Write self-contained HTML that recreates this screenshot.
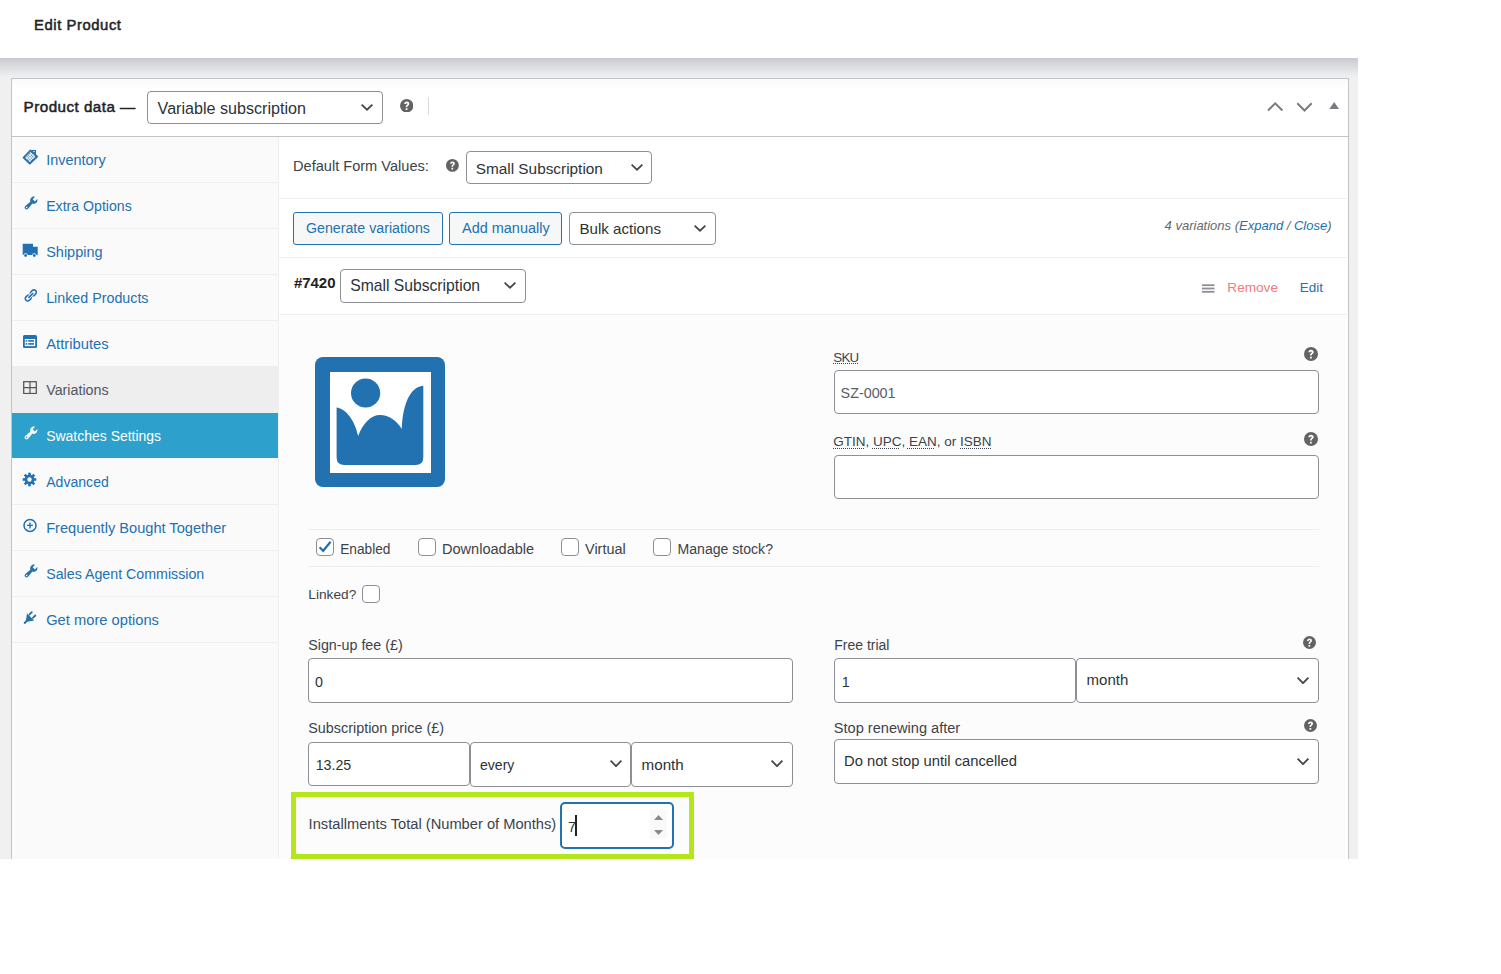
<!DOCTYPE html>
<html><head><meta charset="utf-8">
<style>
html,body{margin:0;padding:0;}
body{width:1501px;height:974px;position:relative;overflow:hidden;background:#fff;font-family:"Liberation Sans",sans-serif;color:#3c434a;}
.a{position:absolute;}
.t{position:absolute;white-space:nowrap;line-height:1;}
#admin{left:0;top:58px;width:1358px;height:801px;background:#f0f0f1;overflow:hidden;}
#shadow{left:0;top:0;width:1358px;height:20px;background:linear-gradient(#c8cacd,#d5d7da 30%,#e2e3e6 60%,#ecedef 85%,#f0f0f1);}
</style></head>
<body>
<div class="t" style="left:34.00px;top:15.00px;font-size:14.80px;color:#1d2327;line-height:20px;-webkit-text-stroke:0.5px #1d2327;letter-spacing:0.58px;">Edit Product</div>
<div id="admin" class="a"><div id="shadow" class="a"></div></div>
<div class="a" style="left:11px;top:78px;width:1336px;height:780px;border:1px solid #c3c4c7;border-bottom:none;background:#fff;"></div>
<div class="a" style="left:12px;top:79px;width:1336px;height:12px;background:linear-gradient(#fafafa,#fff);"></div>
<div class="a" style="left:12px;top:136px;width:1336px;height:1px;background:#c3c4c7;"></div>
<div class="a" style="left:12px;top:137px;width:266px;height:722px;background:#fafafa;"></div>
<div class="a" style="left:278px;top:137px;width:1px;height:722px;background:#eee;"></div>
<div class="a" style="left:279px;top:137px;width:1068px;height:722px;background:#fff;"></div>
<div class="t" style="left:23.60px;top:96.00px;font-size:15.20px;color:#1d2327;line-height:21px;-webkit-text-stroke:0.5px #1d2327;letter-spacing:0.47px;">Product data —</div>
<div class="a" style="left:147px;top:91px;width:236px;height:33px;border:1px solid #8c8f94;border-radius:4px;background:#fff;box-sizing:border-box;"></div>
<div class="t" style="left:157.60px;top:97.00px;font-size:16.11px;color:#2c3338;line-height:22px;">Variable subscription</div>
<svg class="a" style="left:360px;top:103.2px;width:14px;height:8.299999999999997px" viewBox="-1 -1 14 8.299999999999997"><path d="M0.6 0.6L6.0 5.6999999999999975L11.4 0.6" fill="none" stroke="#454545" stroke-width="1.75"/></svg>
<svg class="a" style="left:399.70px;top:98.70px;width:13.40px;height:13.40px" viewBox="0 0 20 20"><circle cx="10" cy="10" r="10" fill="#636363"/><path d="M6.2 7.6C6.2 5.2 7.9 3.8 10.1 3.8C12.3 3.8 13.8 5.1 13.8 7.1C13.8 8.6 13 9.4 11.9 10.1C11.2 10.6 11 10.9 11 11.6V12.3H8.6V11.4C8.6 10.2 9.1 9.5 10 8.9C10.8 8.4 11.1 8.1 11.1 7.4C11.1 6.7 10.7 6.3 10 6.3C9.2 6.3 8.8 6.8 8.8 7.6Z M8.5 13.8H11.1V16.6H8.5Z" fill="#fff"/></svg>
<div class="a" style="left:428px;top:97px;width:1px;height:18px;background:#dcdcde;"></div>
<svg class="a" style="left:1264px;top:99px;width:80px;height:16px" viewBox="1264 99 80 16"><path d="M1268 110.5L1275.2 103.3L1282.4 110.5" fill="none" stroke="#787c82" stroke-width="2"/><path d="M1297.3 103.3L1304.5 110.5L1311.7 103.3" fill="none" stroke="#787c82" stroke-width="2"/><path d="M1329.3 109L1334.2 102L1339 109z" fill="#787c82"/></svg>
<div class="a" style="left:12px;top:182px;width:266px;height:1px;background:#eee;"></div>
<div class="t" style="left:46.20px;top:150.00px;font-size:14.46px;color:#2271b1;line-height:20px;">Inventory</div>
<div class="a" style="left:12px;top:228px;width:266px;height:1px;background:#eee;"></div>
<div class="t" style="left:46.20px;top:196.00px;font-size:14.14px;color:#2271b1;line-height:20px;">Extra Options</div>
<div class="a" style="left:12px;top:274px;width:266px;height:1px;background:#eee;"></div>
<div class="t" style="left:46.20px;top:242.00px;font-size:14.47px;color:#2271b1;line-height:20px;">Shipping</div>
<div class="a" style="left:12px;top:320px;width:266px;height:1px;background:#eee;"></div>
<div class="t" style="left:46.20px;top:288.00px;font-size:14.28px;color:#2271b1;line-height:20px;">Linked Products</div>
<div class="a" style="left:12px;top:366px;width:266px;height:1px;background:#eee;"></div>
<div class="t" style="left:46.20px;top:334.00px;font-size:14.79px;color:#2271b1;line-height:20px;">Attributes</div>
<div class="a" style="left:12px;top:367px;width:266px;height:45px;background:#eee;"></div>
<div class="a" style="left:12px;top:412px;width:266px;height:1px;background:#eee;"></div>
<div class="t" style="left:46.20px;top:380.00px;font-size:14.29px;color:#50575e;line-height:20px;">Variations</div>
<div class="a" style="left:12px;top:413px;width:266px;height:45px;background:#2ea0cc;"></div>
<div class="t" style="left:46.20px;top:426.00px;font-size:13.98px;color:#fff;line-height:20px;">Swatches Settings</div>
<div class="a" style="left:12px;top:504px;width:266px;height:1px;background:#eee;"></div>
<div class="t" style="left:46.20px;top:472.00px;font-size:14.09px;color:#2271b1;line-height:20px;">Advanced</div>
<div class="a" style="left:12px;top:550px;width:266px;height:1px;background:#eee;"></div>
<div class="t" style="left:46.20px;top:518.00px;font-size:14.62px;color:#2271b1;line-height:20px;">Frequently Bought Together</div>
<div class="a" style="left:12px;top:596px;width:266px;height:1px;background:#eee;"></div>
<div class="t" style="left:46.20px;top:564.00px;font-size:14.23px;color:#2271b1;line-height:20px;">Sales Agent Commission</div>
<div class="a" style="left:12px;top:642px;width:266px;height:1px;background:#eee;"></div>
<div class="t" style="left:46.20px;top:610.00px;font-size:14.71px;color:#2271b1;line-height:20px;">Get more options</div>
<div class="t" style="left:293.00px;top:156.00px;font-size:14.59px;color:#3c434a;line-height:20px;">Default Form Values:</div>
<svg class="a" style="left:446.30px;top:159.30px;width:12.80px;height:12.80px" viewBox="0 0 20 20"><circle cx="10" cy="10" r="10" fill="#636363"/><path d="M6.2 7.6C6.2 5.2 7.9 3.8 10.1 3.8C12.3 3.8 13.8 5.1 13.8 7.1C13.8 8.6 13 9.4 11.9 10.1C11.2 10.6 11 10.9 11 11.6V12.3H8.6V11.4C8.6 10.2 9.1 9.5 10 8.9C10.8 8.4 11.1 8.1 11.1 7.4C11.1 6.7 10.7 6.3 10 6.3C9.2 6.3 8.8 6.8 8.8 7.6Z M8.5 13.8H11.1V16.6H8.5Z" fill="#fff"/></svg>
<div class="a" style="left:466px;top:151px;width:186px;height:33px;border:1px solid #8c8f94;border-radius:4px;background:#fff;box-sizing:border-box;"></div>
<div class="t" style="left:475.70px;top:158.00px;font-size:15.37px;color:#2c3338;line-height:21px;">Small Subscription</div>
<svg class="a" style="left:630px;top:163.2px;width:14px;height:8.300000000000011px" viewBox="-1 -1 14 8.300000000000011"><path d="M0.6 0.6L6.0 5.700000000000012L11.4 0.6" fill="none" stroke="#454545" stroke-width="1.75"/></svg>
<div class="a" style="left:279px;top:198px;width:1068px;height:1px;background:#eee;"></div>
<div class="a" style="left:293px;top:212px;width:150px;height:33px;border:1px solid #2271b1;border-radius:3px;background:#f6f7f7;box-sizing:border-box;"></div>
<div class="t" style="left:306.00px;top:218.00px;font-size:14.21px;color:#2271b1;line-height:20px;">Generate variations</div>
<div class="a" style="left:449px;top:212px;width:113px;height:33px;border:1px solid #2271b1;border-radius:3px;background:#f6f7f7;box-sizing:border-box;"></div>
<div class="t" style="left:462.00px;top:218.00px;font-size:14.47px;color:#2271b1;line-height:20px;">Add manually</div>
<div class="a" style="left:569px;top:212px;width:147px;height:33px;border:1px solid #8c8f94;border-radius:4px;background:#fff;box-sizing:border-box;"></div>
<div class="t" style="left:579.50px;top:218.00px;font-size:15.12px;color:#2c3338;line-height:21px;">Bulk actions</div>
<svg class="a" style="left:693px;top:223.7px;width:14px;height:8.300000000000011px" viewBox="-1 -1 14 8.300000000000011"><path d="M0.6 0.6L6.0 5.700000000000012L11.4 0.6" fill="none" stroke="#454545" stroke-width="1.75"/></svg>
<div class="t" style="left:1164.6px;top:216px;line-height:19px;font-size:13px;font-style:italic;color:#646970;" id="varcount">4 variations (<span style="color:#2271b1">Expand</span> / <span style="color:#2271b1">Close</span>)</div>
<div class="a" style="left:279px;top:257px;width:1068px;height:1px;background:#eee;"></div>
<div class="t" style="left:293.90px;top:272.00px;font-size:14.96px;color:#1d2327;font-weight:bold;line-height:21px;">#7420</div>
<div class="a" style="left:340px;top:269px;width:186px;height:34px;border:1px solid #8c8f94;border-radius:4px;background:#fff;box-sizing:border-box;"></div>
<div class="t" style="left:350.20px;top:275.00px;font-size:15.70px;color:#2c3338;line-height:21px;">Small Subscription</div>
<svg class="a" style="left:503px;top:281.2px;width:14px;height:8.300000000000011px" viewBox="-1 -1 14 8.300000000000011"><path d="M0.6 0.6L6.0 5.700000000000012L11.4 0.6" fill="none" stroke="#454545" stroke-width="1.75"/></svg>
<svg class="a" style="left:1202px;top:284px;width:13px;height:9px" viewBox="0 0 13 9"><rect x="0" y="0.3" width="12.5" height="1.8" fill="#8c8f94"/><rect x="0" y="3.6" width="12.5" height="1.8" fill="#8c8f94"/><rect x="0" y="6.9" width="12.5" height="1.8" fill="#8c8f94"/></svg>
<div class="t" style="left:1227.30px;top:278.00px;font-size:13.61px;color:#f47b7b;line-height:19px;">Remove</div>
<div class="t" style="left:1299.80px;top:278.00px;font-size:13.45px;color:#2271b1;line-height:19px;">Edit</div>
<div class="a" style="left:279px;top:314px;width:1068px;height:1px;background:#eee;"></div>
<div class="a" style="left:279px;top:315px;width:1067px;height:544px;background:#fcfcfc;"></div>
<svg class="a" style="left:315px;top:357px;width:130px;height:130px" viewBox="0 0 130 130"><rect x="0" y="0" width="130" height="130" rx="8" fill="#2271b1"/><rect x="15" y="15" width="101" height="101" fill="#fff"/><circle cx="50.6" cy="36" r="14.6" fill="#2271b1"/><path d="M21.6 50.4C31 51.5 39.5 63 43.2 79C48 66 56 58 65 58C74 58 82 64 86.8 72C87.5 50 94 30 108.3 28.8V100.3Q108.3 108 100.6 108H29.3Q21.6 108 21.6 100.3Z" fill="#2271b1"/></svg>
<div class="t" style="left:833.3px;top:348px;line-height:19px;font-size:13.3px;color:#3c434a;letter-spacing:-0.75px;">SKU</div>
<svg class="a" style="left:833px;top:363px;width:25px;height:1px" viewBox="0 0 25 1"><line x1="0" y1="0.5" x2="25" y2="0.5" stroke="#3c434a" stroke-width="1" stroke-dasharray="1 1"/></svg>
<svg class="a" style="left:1304.00px;top:347.00px;width:14.00px;height:14.00px" viewBox="0 0 20 20"><circle cx="10" cy="10" r="10" fill="#636363"/><path d="M6.2 7.6C6.2 5.2 7.9 3.8 10.1 3.8C12.3 3.8 13.8 5.1 13.8 7.1C13.8 8.6 13 9.4 11.9 10.1C11.2 10.6 11 10.9 11 11.6V12.3H8.6V11.4C8.6 10.2 9.1 9.5 10 8.9C10.8 8.4 11.1 8.1 11.1 7.4C11.1 6.7 10.7 6.3 10 6.3C9.2 6.3 8.8 6.8 8.8 7.6Z M8.5 13.8H11.1V16.6H8.5Z" fill="#fff"/></svg>
<div class="a" style="left:834px;top:370px;width:485px;height:44px;border:1px solid #8c8f94;border-radius:4px;background:#fff;box-sizing:border-box;"></div>
<div class="t" style="left:840.60px;top:383.00px;font-size:14.34px;color:#585e65;line-height:20px;">SZ-0001</div>
<div class="t" style="left:833.3px;top:432px;line-height:19px;font-size:13.5px;color:#3c434a;" id="gtin">GTIN, UPC, EAN, or ISBN</div>
<svg class="a" style="left:833px;top:448px;width:31px;height:1px" viewBox="0 0 31 1"><line x1="0" y1="0.5" x2="31" y2="0.5" stroke="#3c434a" stroke-width="1" stroke-dasharray="1 1"/></svg>
<svg class="a" style="left:872px;top:448px;width:27px;height:1px" viewBox="0 0 27 1"><line x1="0" y1="0.5" x2="27" y2="0.5" stroke="#3c434a" stroke-width="1" stroke-dasharray="1 1"/></svg>
<svg class="a" style="left:907px;top:448px;width:27px;height:1px" viewBox="0 0 27 1"><line x1="0" y1="0.5" x2="27" y2="0.5" stroke="#3c434a" stroke-width="1" stroke-dasharray="1 1"/></svg>
<svg class="a" style="left:960px;top:448px;width:31px;height:1px" viewBox="0 0 31 1"><line x1="0" y1="0.5" x2="31" y2="0.5" stroke="#3c434a" stroke-width="1" stroke-dasharray="1 1"/></svg>
<svg class="a" style="left:1304.00px;top:432.00px;width:14.00px;height:14.00px" viewBox="0 0 20 20"><circle cx="10" cy="10" r="10" fill="#636363"/><path d="M6.2 7.6C6.2 5.2 7.9 3.8 10.1 3.8C12.3 3.8 13.8 5.1 13.8 7.1C13.8 8.6 13 9.4 11.9 10.1C11.2 10.6 11 10.9 11 11.6V12.3H8.6V11.4C8.6 10.2 9.1 9.5 10 8.9C10.8 8.4 11.1 8.1 11.1 7.4C11.1 6.7 10.7 6.3 10 6.3C9.2 6.3 8.8 6.8 8.8 7.6Z M8.5 13.8H11.1V16.6H8.5Z" fill="#fff"/></svg>
<div class="a" style="left:834px;top:455px;width:485px;height:44px;border:1px solid #8c8f94;border-radius:4px;background:#fff;box-sizing:border-box;"></div>
<div class="a" style="left:308px;top:529px;width:1011px;height:1px;background:#eee;"></div>
<div class="a" style="left:308px;top:566px;width:1011px;height:1px;background:#eee;"></div>
<div class="a" style="left:316px;top:538px;width:18px;height:18px;border:1px solid #8c8f94;border-radius:4px;background:#fff;box-sizing:border-box;"></div>
<svg class="a" style="left:316px;top:538px;width:18px;height:18px" viewBox="0 0 18 18"><path d="M3.6 9.2L7.2 12.8L14.6 3.8" fill="none" stroke="#2271b1" stroke-width="2.2"/></svg>
<div class="t" style="left:340.20px;top:540.00px;font-size:13.71px;color:#3c434a;line-height:19px;">Enabled</div>
<div class="a" style="left:418px;top:538px;width:18px;height:18px;border:1px solid #8c8f94;border-radius:4px;background:#fff;box-sizing:border-box;"></div>
<div class="t" style="left:442.00px;top:539.00px;font-size:14.56px;color:#3c434a;line-height:20px;">Downloadable</div>
<div class="a" style="left:561px;top:538px;width:18px;height:18px;border:1px solid #8c8f94;border-radius:4px;background:#fff;box-sizing:border-box;"></div>
<div class="t" style="left:585.00px;top:539.00px;font-size:14.49px;color:#3c434a;line-height:20px;">Virtual</div>
<div class="a" style="left:653px;top:538px;width:18px;height:18px;border:1px solid #8c8f94;border-radius:4px;background:#fff;box-sizing:border-box;"></div>
<div class="t" style="left:677.50px;top:539.00px;font-size:14.09px;color:#3c434a;line-height:20px;">Manage stock?</div>
<div class="t" style="left:308.30px;top:585.00px;font-size:13.69px;color:#3c434a;line-height:19px;">Linked?</div>
<div class="a" style="left:362px;top:585px;width:18px;height:18px;border:1px solid #8c8f94;border-radius:4px;background:#fff;box-sizing:border-box;"></div>
<div class="t" style="left:308.20px;top:635.00px;font-size:14.29px;color:#3c434a;line-height:20px;">Sign-up fee (£)</div>
<div class="a" style="left:308px;top:658px;width:485px;height:45px;border:1px solid #8c8f94;border-radius:4px;background:#fff;box-sizing:border-box;"></div>
<div class="t" style="left:315.00px;top:672.00px;font-size:14.30px;color:#2c3338;line-height:20px;">0</div>
<div class="t" style="left:834.30px;top:635.00px;font-size:13.97px;color:#3c434a;line-height:20px;">Free trial</div>
<svg class="a" style="left:1303.40px;top:635.70px;width:13.00px;height:13.00px" viewBox="0 0 20 20"><circle cx="10" cy="10" r="10" fill="#636363"/><path d="M6.2 7.6C6.2 5.2 7.9 3.8 10.1 3.8C12.3 3.8 13.8 5.1 13.8 7.1C13.8 8.6 13 9.4 11.9 10.1C11.2 10.6 11 10.9 11 11.6V12.3H8.6V11.4C8.6 10.2 9.1 9.5 10 8.9C10.8 8.4 11.1 8.1 11.1 7.4C11.1 6.7 10.7 6.3 10 6.3C9.2 6.3 8.8 6.8 8.8 7.6Z M8.5 13.8H11.1V16.6H8.5Z" fill="#fff"/></svg>
<div class="a" style="left:834px;top:658px;width:242px;height:45px;border:1px solid #8c8f94;border-radius:4px;background:#fff;box-sizing:border-box;"></div>
<div class="t" style="left:841.80px;top:672.00px;font-size:14.30px;color:#2c3338;line-height:20px;">1</div>
<div class="a" style="left:1076px;top:658px;width:243px;height:45px;border:1px solid #8c8f94;border-radius:4px;background:#fff;box-sizing:border-box;"></div>
<div class="t" style="left:1086.60px;top:669.00px;font-size:15.00px;color:#2c3338;line-height:21px;">month</div>
<svg class="a" style="left:1296px;top:675.7px;width:14px;height:8.799999999999955px" viewBox="-1 -1 14 8.799999999999955"><path d="M0.6 0.6L6.0 6.199999999999955L11.4 0.6" fill="none" stroke="#454545" stroke-width="1.75"/></svg>
<div class="t" style="left:308.30px;top:718.00px;font-size:14.36px;color:#3c434a;line-height:20px;">Subscription price (£)</div>
<div class="a" style="left:308px;top:742px;width:162px;height:44px;border:1px solid #8c8f94;border-radius:4px;background:#fff;box-sizing:border-box;"></div>
<div class="t" style="left:315.70px;top:755.00px;font-size:14.21px;color:#2c3338;line-height:20px;">13.25</div>
<div class="a" style="left:470px;top:742px;width:161px;height:45px;border:1px solid #8c8f94;border-radius:4px;background:#fff;box-sizing:border-box;"></div>
<div class="t" style="left:480.00px;top:755.00px;font-size:14.07px;color:#2c3338;line-height:20px;">every</div>
<svg class="a" style="left:609px;top:758.7px;width:14px;height:8.799999999999955px" viewBox="-1 -1 14 8.799999999999955"><path d="M0.6 0.6L6.0 6.199999999999955L11.4 0.6" fill="none" stroke="#454545" stroke-width="1.75"/></svg>
<div class="a" style="left:631px;top:742px;width:162px;height:45px;border:1px solid #8c8f94;border-radius:4px;background:#fff;box-sizing:border-box;"></div>
<div class="t" style="left:641.60px;top:754.00px;font-size:15.18px;color:#2c3338;line-height:21px;">month</div>
<svg class="a" style="left:769.5px;top:758.7px;width:14.0px;height:8.799999999999955px" viewBox="-1 -1 14.0 8.799999999999955"><path d="M0.6 0.6L6.0 6.199999999999955L11.4 0.6" fill="none" stroke="#454545" stroke-width="1.75"/></svg>
<div class="t" style="left:833.80px;top:718.00px;font-size:14.58px;color:#3c434a;line-height:20px;">Stop renewing after</div>
<svg class="a" style="left:1303.50px;top:718.50px;width:13.00px;height:13.00px" viewBox="0 0 20 20"><circle cx="10" cy="10" r="10" fill="#636363"/><path d="M6.2 7.6C6.2 5.2 7.9 3.8 10.1 3.8C12.3 3.8 13.8 5.1 13.8 7.1C13.8 8.6 13 9.4 11.9 10.1C11.2 10.6 11 10.9 11 11.6V12.3H8.6V11.4C8.6 10.2 9.1 9.5 10 8.9C10.8 8.4 11.1 8.1 11.1 7.4C11.1 6.7 10.7 6.3 10 6.3C9.2 6.3 8.8 6.8 8.8 7.6Z M8.5 13.8H11.1V16.6H8.5Z" fill="#fff"/></svg>
<div class="a" style="left:834px;top:739px;width:485px;height:45px;border:1px solid #8c8f94;border-radius:4px;background:#fff;box-sizing:border-box;"></div>
<div class="t" style="left:844.00px;top:751.00px;font-size:14.75px;color:#2c3338;line-height:20px;">Do not stop until cancelled</div>
<svg class="a" style="left:1296px;top:756.7px;width:14px;height:8.799999999999955px" viewBox="-1 -1 14 8.799999999999955"><path d="M0.6 0.6L6.0 6.199999999999955L11.4 0.6" fill="none" stroke="#454545" stroke-width="1.75"/></svg>
<div class="a" style="left:291px;top:792px;width:403px;height:67px;border:5px solid #b3e61b;border-bottom:none;box-sizing:border-box;"></div>
<div class="a" style="left:291px;top:854px;width:403px;height:5px;background:#b3e61b;"></div>
<div class="t" style="left:308.60px;top:814.00px;font-size:14.68px;color:#3c434a;line-height:20px;">Installments Total (Number of Months)</div>
<div class="a" style="left:560px;top:802px;width:114px;height:47px;border:2px solid #2271b1;border-radius:5px;background:#fff;box-sizing:border-box;"></div>
<div class="t" style="left:568.00px;top:817.00px;font-size:14.30px;color:#2c3338;line-height:20px;">7</div>
<div class="a" style="left:575px;top:815px;width:2px;height:21px;background:#1d2327;"></div>
<svg class="a" style="left:650px;top:810px;width:18px;height:30px" viewBox="0 0 18 30"><rect x="0" y="0" width="17" height="29" fill="#f9f9f9"/><path d="M4 10H13L8.5 5z" fill="#8a8a8a"/><path d="M4 20H13L8.5 25z" fill="#8a8a8a"/></svg>
<svg class="a" style="left:20px;top:146px;width:20px;height:20px" viewBox="0 0 20 20">
<defs><pattern id="chk" width="2" height="2" patternUnits="userSpaceOnUse" patternTransform="rotate(45)"><rect width="2" height="2" fill="#fafafa"/><rect width="1.1" height="1.1" fill="#2271b1"/></pattern></defs>
<path d="M3.6 11.6L10.6 4.4L17.2 10.6L9.8 17.5Z" fill="url(#chk)" stroke="#2271b1" stroke-width="1.8" stroke-linejoin="round"/>
<path d="M12.4 5.9V4.6H15.4V8.4" fill="none" stroke="#2271b1" stroke-width="1.2"/><rect x="13.6" y="6" width="1.2" height="1.2" fill="#2271b1"/></svg>
<svg class="a" style="left:22.5px;top:194.8px;width:16px;height:16px" viewBox="0 0 20 20"><path d="M16.68 9.77c-1.34 1.34-3.3 1.67-4.95.99l-5.41 6.52c-.99.99-2.59.99-3.58 0s-.99-2.59 0-3.57l6.52-5.42c-.68-1.65-.35-3.61.99-4.95 1.28-1.28 3.12-1.62 4.72-1.06l-2.89 2.89 2.82 2.82 2.86-2.87c.53 1.58.18 3.39-1.08 4.65zM3.81 16.21c.4.39 1.04.39 1.43 0 .4-.4.4-1.04 0-1.43-.39-.4-1.03-.4-1.43 0-.39.39-.39 1.03 0 1.43z" fill="#2271b1"/></svg>
<svg class="a" style="left:22px;top:243px;width:17px;height:15px" viewBox="0 0 17 15"><path d="M0.7 0.8H11V3.8H15.7V12H0.7Z" fill="#2271b1"/><circle cx="3.6" cy="12.5" r="2.2" fill="#fafafa"/><circle cx="12.3" cy="12.5" r="2.2" fill="#fafafa"/><circle cx="3.6" cy="12.5" r="1.4" fill="#2271b1"/><circle cx="12.3" cy="12.5" r="1.4" fill="#2271b1"/></svg>
<svg class="a" style="left:22.9px;top:287.9px;width:14.9px;height:14.9px" viewBox="0 0 20 20"><path d="M17.74 2.76c1.68 1.69 1.68 4.41 0 6.1l-1.53 1.52c-1.12 1.12-2.7 1.47-4.14 1.09l2.62-2.61.76-.77.76-.76c.84-.84.84-2.2 0-3.04-.84-.85-2.2-.85-3.04 0l-.77.76-3.38 3.38c-.37-1.44-.02-3.02 1.1-4.14l1.52-1.53c1.69-1.68 4.42-1.68 6.1 0zM8.59 13.43l5.34-5.34c.42-.42.42-1.1 0-1.52-.44-.43-1.13-.39-1.53 0l-5.33 5.34c-.42.42-.42 1.1 0 1.52.44.43 1.13.39 1.52 0zm-.76 2.29l4.14-4.15c.38 1.44.03 3.02-1.09 4.14l-1.52 1.53c-1.69 1.68-4.41 1.68-6.1 0-1.68-1.68-1.68-4.42 0-6.1l1.53-1.52c1.12-1.12 2.7-1.47 4.14-1.1l-4.14 4.15c-.85.84-.85 2.2 0 3.05.84.84 2.2.84 3.04 0z" fill="#2271b1"/></svg>
<svg class="a" style="left:23px;top:335px;width:14px;height:13px" viewBox="0 0 14 13"><rect x="0" y="0" width="14" height="13" rx="1.6" fill="#2271b1"/><rect x="1.8" y="4" width="10.4" height="7.2" fill="#fafafa"/><rect x="2.6" y="5.1" width="1.6" height="1.6" fill="#2271b1"/><rect x="5.2" y="5.1" width="5.8" height="1.6" fill="#2271b1"/><rect x="2.6" y="8.1" width="1.6" height="1.6" fill="#2271b1"/><rect x="5.2" y="8.1" width="5.8" height="1.6" fill="#2271b1"/></svg>
<svg class="a" style="left:23px;top:381px;width:14px;height:13px" viewBox="0 0 14 13"><rect x="0.7" y="0.7" width="12.6" height="11.8" fill="none" stroke="#555" stroke-width="1.25"/><path d="M7 0.7V12.3M0.7 6.6H13.3" stroke="#555" stroke-width="1.2"/></svg>
<svg class="a" style="left:22.5px;top:424.8px;width:16px;height:16px" viewBox="0 0 20 20"><path d="M16.68 9.77c-1.34 1.34-3.3 1.67-4.95.99l-5.41 6.52c-.99.99-2.59.99-3.58 0s-.99-2.59 0-3.57l6.52-5.42c-.68-1.65-.35-3.61.99-4.95 1.28-1.28 3.12-1.62 4.72-1.06l-2.89 2.89 2.82 2.82 2.86-2.87c.53 1.58.18 3.39-1.08 4.65zM3.81 16.21c.4.39 1.04.39 1.43 0 .4-.4.4-1.04 0-1.43-.39-.4-1.03-.4-1.43 0-.39.39-.39 1.03 0 1.43z" fill="#fff"/></svg>
<svg class="a" style="left:22.3px;top:472.3px;width:15px;height:15px" viewBox="0 0 15 15"><g transform="translate(7.5 7.5)" fill="#2271b1"><rect x="-1.3" y="-6.8" width="2.6" height="3" transform="rotate(0)"/><rect x="-1.3" y="-6.8" width="2.6" height="3" transform="rotate(45)"/><rect x="-1.3" y="-6.8" width="2.6" height="3" transform="rotate(90)"/><rect x="-1.3" y="-6.8" width="2.6" height="3" transform="rotate(135)"/><rect x="-1.3" y="-6.8" width="2.6" height="3" transform="rotate(180)"/><rect x="-1.3" y="-6.8" width="2.6" height="3" transform="rotate(225)"/><rect x="-1.3" y="-6.8" width="2.6" height="3" transform="rotate(270)"/><rect x="-1.3" y="-6.8" width="2.6" height="3" transform="rotate(315)"/><circle r="4.8"/></g><circle cx="7.5" cy="7.5" r="2.2" fill="#fafafa"/></svg>
<svg class="a" style="left:22px;top:518px;width:16px;height:16px" viewBox="0 0 16 16"><circle cx="8" cy="7.4" r="6" fill="none" stroke="#2271b1" stroke-width="1.5"/><path d="M8 4.4V10.4M5 7.4H11" stroke="#2271b1" stroke-width="1.4"/></svg>
<svg class="a" style="left:22.5px;top:562.8px;width:16px;height:16px" viewBox="0 0 20 20"><path d="M16.68 9.77c-1.34 1.34-3.3 1.67-4.95.99l-5.41 6.52c-.99.99-2.59.99-3.58 0s-.99-2.59 0-3.57l6.52-5.42c-.68-1.65-.35-3.61.99-4.95 1.28-1.28 3.12-1.62 4.72-1.06l-2.89 2.89 2.82 2.82 2.86-2.87c.53 1.58.18 3.39-1.08 4.65zM3.81 16.21c.4.39 1.04.39 1.43 0 .4-.4.4-1.04 0-1.43-.39-.4-1.03-.4-1.43 0-.39.39-.39 1.03 0 1.43z" fill="#2271b1"/></svg>
<svg class="a" style="left:22px;top:610px;width:16px;height:15px" viewBox="0 0 16 15"><path d="M5 3.6L12.2 10.6L3.7 12.1Z" fill="#2271b1"/><path d="M4.6 11.1L2.7 12.9" stroke="#2271b1" stroke-width="2" stroke-linecap="round"/><path d="M7.4 4.5L9.8 2.2M10.9 7.9L13.3 5.5" stroke="#2271b1" stroke-width="1.8" stroke-linecap="round"/></svg>
</body></html>
